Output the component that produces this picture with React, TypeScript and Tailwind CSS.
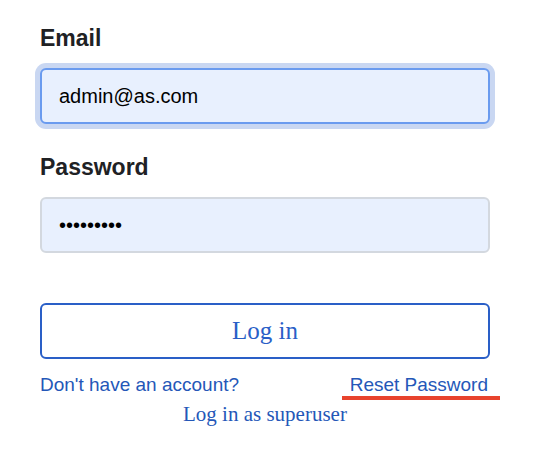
import React from 'react';

export default function App() {
  const sans = { fontFamily: '"Liberation Sans", Arial, sans-serif' };
  const serif = { fontFamily: '"Liberation Serif", "Times New Roman", serif' };

  return (
    <div className="min-h-screen w-[558px] bg-white" style={sans}>
      <form className="w-[450px] ml-10 pt-6 flex flex-col" onSubmit={(e) => e.preventDefault()}>
        <label htmlFor="email" className="block text-[23px] leading-[28px] font-bold text-[#202124] mb-4">
          Email
        </label>
        <input
          id="email"
          type="email"
          readOnly
          value="admin@as.com"
          className="h-14 w-full rounded-md border-2 border-[#6a9bef] bg-[#e8f0fe] px-[17px] text-[20px] text-black outline-none ring-[5px] ring-[#c9d7f2]"
          style={sans}
        />

        <label htmlFor="password" className="block mt-[29px] text-[23px] leading-[28px] font-bold text-[#202124] mb-4">
          Password
        </label>
        <input
          id="password"
          type="password"
          readOnly
          value="123456789"
          className="h-14 w-full rounded-md border-2 border-[#d3d8df] bg-[#e8f0fe] px-[17px] text-[20px] text-black outline-none"
          style={sans}
        />

        <button
          type="submit"
          className="mt-[50px] h-14 w-full rounded-md border-2 border-[#2a5fc7] bg-white text-[25px] text-[#2a5fc7] flex items-center justify-center"
          style={serif}
        >
          Log in
        </button>

        <div className="relative mt-[15px] flex justify-between pr-[2px] text-[19px] leading-[22px] text-[#2457b8]">
          <a href="#" className="whitespace-nowrap">Don't have an account?</a>
          <a href="#" className="whitespace-nowrap">Reset Password</a>
          <span className="absolute left-[302px] top-[22px] h-[4px] w-[158px] bg-[#e8432d]" />
        </div>

        <a href="#" className="mt-[6px] self-center text-[21px] leading-[24px] text-[#2457b8]" style={serif}>
          Log in as superuser
        </a>
      </form>
    </div>
  );
}
